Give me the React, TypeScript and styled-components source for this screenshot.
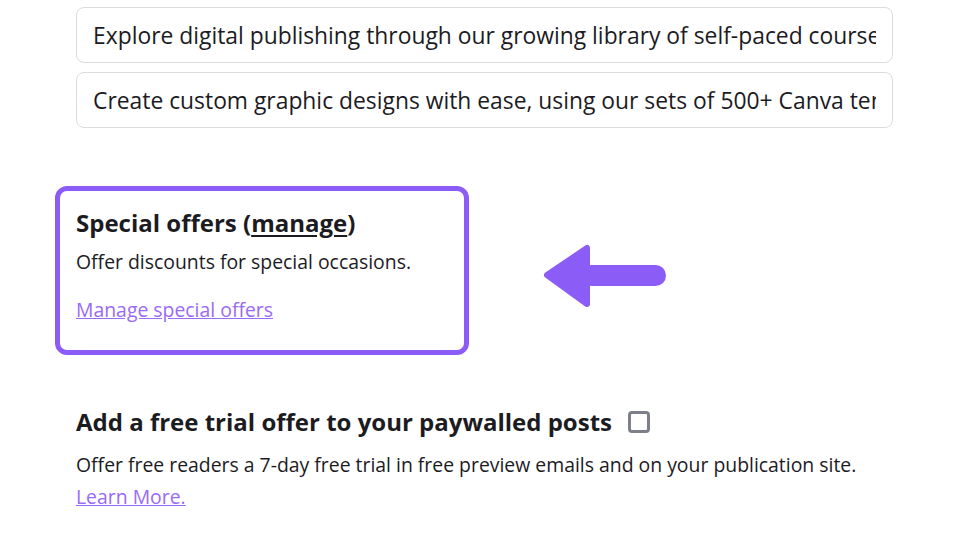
import styled, { createGlobalStyle } from 'styled-components';

const PURPLE = '#8b5cf6';
const LINK = '#9a6af8';
const INK = '#1c1b1f';
const FONT_STACK = '"Open Sans", "Noto Sans", Arial, sans-serif';

const GlobalStyle = createGlobalStyle`
  html, body {
    margin: 0;
    padding: 0;
    background: #ffffff;
  }
  body {
    font-family: ${FONT_STACK};
    color: ${INK};
  }
`;

const App = () => {
  return (
    <Page>
      <GlobalStyle />
      <Column>
        <FieldList>
          <TextField readOnly value="Explore digital publishing through our growing library of self-paced courses" />
          <TextField readOnly value="Create custom graphic designs with ease, using our sets of 500+ Canva templates" />
        </FieldList>

        <HighlightRow>
          <HighlightBox>
            <Heading>
              Special offers (<HeadingLink href="#">manage</HeadingLink>)
            </Heading>
            <Body>Offer discounts for special occasions.</Body>
            <ActionLink href="#">Manage special offers</ActionLink>
          </HighlightBox>
          <PointerArrow />
        </HighlightRow>

        <TrialSection>
          <TrialHeader>
            <Heading as="h3">Add a free trial offer to your paywalled posts</Heading>
            <Checkbox type="checkbox" />
          </TrialHeader>
          <TrialText>Offer free readers a 7-day free trial in free preview emails and on your publication site.</TrialText>
          <InlineLink href="#">Learn More.</InlineLink>
        </TrialSection>
      </Column>
    </Page>
  );
};

const PointerArrow = () => (
  <ArrowSvg width="124" height="64" viewBox="0 0 124 64">
    <rect x="38" y="21" width="85" height="21" rx="10.5" fill={PURPLE} />
    <path
      d="M4 31 L44 4 L44 60 Z"
      fill={PURPLE}
      stroke={PURPLE}
      strokeWidth="6"
      strokeLinejoin="round"
    />
  </ArrowSvg>
);

const Page = styled.div`
  width: 980px;
  height: 550px;
  overflow: hidden;
  box-sizing: border-box;
  padding: 7px 0 0 76px;
`;

const Column = styled.div`
  width: 817px;
  display: flex;
  flex-direction: column;
`;

const FieldList = styled.div`
  display: flex;
  flex-direction: column;
  gap: 9px;
`;

const TextField = styled.input`
  box-sizing: border-box;
  width: 100%;
  height: 56px;
  padding: 0 16px;
  border: 1px solid #dcdcdc;
  border-radius: 8px;
  font-family: ${FONT_STACK};
  font-size: 22.85px;
  color: ${INK};
  background: #fff;
  outline: none;
`;

const HighlightRow = styled.div`
  display: flex;
  align-items: center;
  gap: 74px;
  margin: 58px 0 0 -21px;
`;

const HighlightBox = styled.div`
  box-sizing: border-box;
  width: 414px;
  height: 169px;
  padding: 16px 16px 0;
  border: 5px solid ${PURPLE};
  border-radius: 12px;
  display: flex;
  flex-direction: column;
`;

const ArrowSvg = styled.svg`
  flex: none;
  margin-top: 10px;
`;

const Heading = styled.h2`
  margin: 0;
  font-size: 24px;
  font-weight: 700;
  line-height: 32px;
  color: ${INK};
`;

const HeadingLink = styled.a`
  color: ${INK};
  text-decoration: underline;
  text-underline-offset: 3px;
`;

const Body = styled.p`
  margin: 9px 0 0;
  font-size: 19.4px;
  line-height: 28px;
  color: ${INK};
`;

const TrialText = styled(Body)`
  margin-top: 13px;
`;

const ActionLink = styled.a`
  margin-top: 20px;
  font-size: 19.4px;
  line-height: 28px;
  color: ${LINK};
  text-decoration: underline;
  align-self: flex-start;
`;

const TrialSection = styled.div`
  display: flex;
  flex-direction: column;
  margin-top: 51px;
`;

const TrialHeader = styled.div`
  display: flex;
  align-items: center;
  gap: 16px;
`;

const Checkbox = styled.input`
  appearance: none;
  box-sizing: border-box;
  width: 22px;
  height: 22px;
  margin: 0;
  border: 3px solid #7d8089;
  border-radius: 4px;
  background: #fff;
`;

const InlineLink = styled.a`
  font-size: 19.4px;
  line-height: 36px;
  color: ${LINK};
  text-decoration: underline;
  align-self: flex-start;
`;

export default App;
